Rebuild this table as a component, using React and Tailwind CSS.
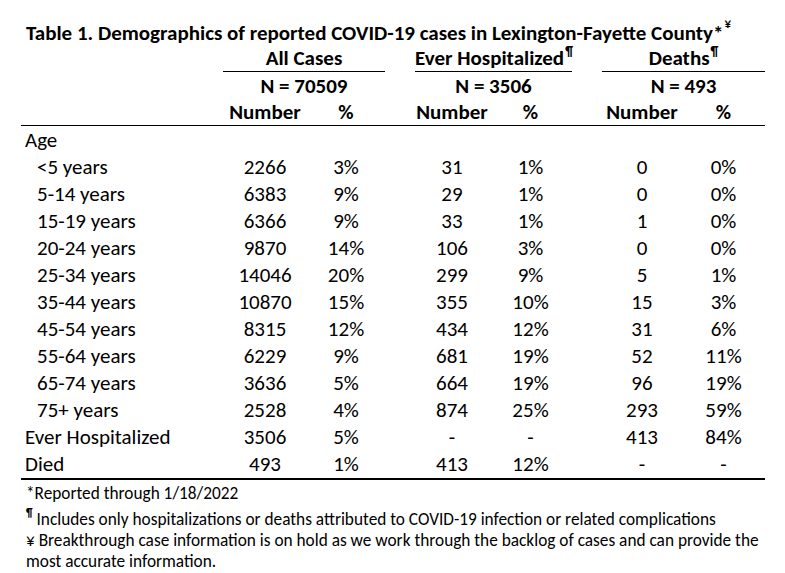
// Table 1 – demographics of reported COVID-19 cases, Lexington-Fayette County

const COLS = 'grid grid-cols-[202px_84px_78px_30px_74px_83px_30px_80px_83px]';

const ageRows = [
  ['<5 years', '2266', '3%', '31', '1%', '0', '0%'],
  ['5-14 years', '6383', '9%', '29', '1%', '0', '0%'],
  ['15-19 years', '6366', '9%', '33', '1%', '1', '0%'],
  ['20-24 years', '9870', '14%', '106', '3%', '0', '0%'],
  ['25-34 years', '14046', '20%', '299', '9%', '5', '1%'],
  ['35-44 years', '10870', '15%', '355', '10%', '15', '3%'],
  ['45-54 years', '8315', '12%', '434', '12%', '31', '6%'],
  ['55-64 years', '6229', '9%', '681', '19%', '52', '11%'],
  ['65-74 years', '3636', '5%', '664', '19%', '96', '19%'],
  ['75+ years', '2528', '4%', '874', '25%', '293', '59%'],
];

const totalRows = [
  ['Ever Hospitalized', '3506', '5%', '-', '-', '413', '84%'],
  ['Died', '493', '1%', '413', '12%', '-', '-'],
];

const Pilcrow = () => (
  <sup className="text-[13px] font-bold top-[-0.7em] ml-[1px]">¶</sup>
);

const DataRow = ({ row, indent }) => (
  <div className={`${COLS} h-[27px]`}>
    <div className={indent ? 'pl-[16px]' : 'pl-[4px]'}>{row[0]}</div>
    <div className="text-center">{row[1]}</div>
    <div className="text-center">{row[2]}</div>
    <div />
    <div className="text-center">{row[3]}</div>
    <div className="text-center">{row[4]}</div>
    <div />
    <div className="text-center">{row[5]}</div>
    <div className="text-center">{row[6]}</div>
  </div>
);

export default function App() {
  return (
    <div className="w-[785px] h-[573px] bg-white text-black font-[Calibri,Carlito,'Liberation_Sans',sans-serif] text-[21px] leading-[27px] pt-[20px] overflow-hidden">
      {/* titulo */}
      <div className="pl-[26px] h-[25px] font-bold whitespace-nowrap">
        Table 1. Demographics of reported COVID-19 cases in Lexington-Fayette County*
        <sup className="text-[13px] top-[-0.9em] ml-[1px]">¥</sup>
      </div>

      <div className="ml-[21px] w-[744px]">
        {/* grupos */}
        <div className={`${COLS} font-bold`}>
          <div />
          <div className="col-span-2 h-[27px] border-b border-black text-center">All Cases</div>
          <div />
          <div className="col-span-2 h-[27px] border-b border-black text-center whitespace-nowrap">
            Ever Hospitalized<Pilcrow />
          </div>
          <div />
          <div className="col-span-2 h-[27px] border-b border-black text-center">
            Deaths<Pilcrow />
          </div>
        </div>

        <div className={`${COLS} font-bold h-[27px] leading-[29px]`}>
          <div />
          <div className="col-span-2 text-center">N = 70509</div>
          <div />
          <div className="col-span-2 text-center">N = 3506</div>
          <div />
          <div className="col-span-2 text-center">N = 493</div>
        </div>

        <div className={`${COLS} font-bold h-[27px] border-b border-black`}>
          <div />
          <div className="text-center">Number</div>
          <div className="text-center">%</div>
          <div />
          <div className="text-center">Number</div>
          <div className="text-center">%</div>
          <div />
          <div className="text-center">Number</div>
          <div className="text-center">%</div>
        </div>

        {/* cuerpo */}
        <div className="pt-[1px] border-b-2 border-black">
          <div className="h-[27px] pl-[4px]">Age</div>
          {ageRows.map((r) => (
            <DataRow key={r[0]} row={r} indent />
          ))}
          {totalRows.map((r) => (
            <DataRow key={r[0]} row={r} />
          ))}
        </div>
      </div>

      {/* notas */}
      <div className="pl-[26px] pr-[20px] text-[17.3px] leading-[21px] mt-[3px]">
        <p>*Reported through 1/18/2022</p>
        <p className="mt-[5px]">
          <sup className="text-[11px] font-bold top-[-0.7em]">¶</sup> Includes only hospitalizations or deaths attributed to COVID-19 infection or related complications
        </p>
        <p>
          ¥ Breakthrough case information is on hold as we work through the backlog of cases and can provide the most accurate information.
        </p>
      </div>
    </div>
  );
}
